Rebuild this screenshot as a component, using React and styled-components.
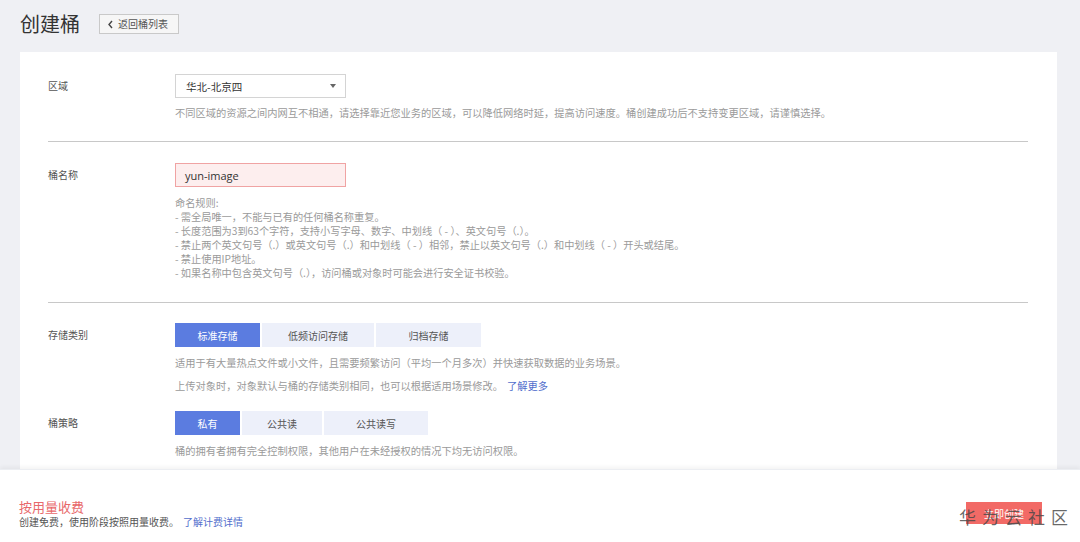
import React from 'react';
import styled, { createGlobalStyle } from 'styled-components';

const GlobalStyle = createGlobalStyle`
  html, body { margin: 0; padding: 0; }
  body {
    background: #eff0f4;
    font-family: "Noto Sans CJK SC", "Noto Sans", sans-serif;
    color: #333;
  }
  * { box-sizing: border-box; }
`;

const Page = styled.div`
  height: 542px;
  display: flex;
  flex-direction: column;
  overflow: hidden;
`;

const Main = styled.div`
  flex: 1;
  overflow: hidden;
  padding: 12px 23px 0 20px;
`;

const Header = styled.div`
  display: flex;
  align-items: center;
  gap: 19px;
  height: 24px;
`;

const Title = styled.h1`
  margin: 0;
  font-size: 20px;
  font-weight: 400;
  line-height: 24px;
  color: #333;
`;

const BackButton = styled.button`
  height: 20px;
  width: 80px;
  padding: 0 0 0 7px;
  border: 1px solid #c9c9c9;
  background: #f6f6f6;
  font-family: "Noto Sans CJK SC", sans-serif;
  font-size: 10px;
  line-height: 18px;
  color: #555;
  display: flex;
  align-items: center;
  gap: 4px;
`;

const Card = styled.div`
  margin-top: 16px;
  background: #fff;
  padding: 22px 29px 40px 28px;
`;

const Row = styled.div`
  display: grid;
  grid-template-columns: 127px 1fr;
  align-items: start;
  margin-top: ${(p) => p.$mt || 0}px;
`;

const Label = styled.div`
  font-size: 10px;
  line-height: 24px;
  color: #555;
`;

const Field = styled.div`
  display: flex;
  flex-direction: column;
  align-items: flex-start;
`;

const Select = styled.div`
  width: 171px;
  height: 24px;
  border: 1px solid #d4d4d4;
  background: #fff;
  display: flex;
  align-items: center;
  justify-content: space-between;
  padding: 0 9px 0 10px;
  font-size: 10.5px;
  color: #333;
`;

const Caret = styled.span`
  width: 0;
  height: 0;
  border-left: 3px solid transparent;
  border-right: 3px solid transparent;
  border-top: 4px solid #666;
`;

const Hint = styled.div`
  margin-top: ${(p) => p.$mt ?? 8}px;
  font-size: 10.25px;
  line-height: 14px;
  color: #9a9a9a;
  white-space: nowrap;
`;

const Link = styled.a`
  color: #526ecc;
  text-decoration: none;
  margin-left: 4px;
`;

const Divider = styled.hr`
  border: 0;
  border-top: 1px solid #c8c8c8;
  margin: ${(p) => p.$top}px 0 ${(p) => p.$bottom}px;
`;

const Input = styled.div`
  width: 171px;
  height: 24px;
  border: 1px solid #f0a3a3;
  background: #fdeeee;
  padding: 0 9px;
  display: flex;
  align-items: center;
  font-family: "Open Sans", "Noto Sans", sans-serif;
  font-size: 11px;
  color: #333;
`;

const Rules = styled.div`
  margin-top: 9px;
  font-size: 10.2px;
  line-height: 14px;
  color: #9a9a9a;
  white-space: nowrap;
`;

const Segment = styled.div`
  display: flex;
  gap: 2px;
`;

const SegButton = styled.button`
  width: ${(p) => p.$w}px;
  height: 24px;
  border: 0;
  padding: 0;
  font-family: "Noto Sans CJK SC", sans-serif;
  font-size: 10px;
  background: ${(p) => (p.$active ? '#5b7ce0' : '#edf0fa')};
  color: ${(p) => (p.$active ? '#fff' : '#555')};
`;

const Footer = styled.div`
  position: relative;
  height: 73px;
  flex: none;
  background: #fff;
  box-shadow: 0 -2px 4px rgba(0, 0, 0, 0.05);
  border-top: 1px solid #eceef2;
  display: flex;
  align-items: center;
  justify-content: space-between;
  padding: 14px 38px 0 19px;
`;

const Pricing = styled.div`
  display: flex;
  flex-direction: column;
`;

const PriceTitle = styled.div`
  font-size: 13px;
  line-height: 17px;
  color: #e8686b;
`;

const PriceSub = styled.div`
  font-size: 10px;
  line-height: 14px;
  color: #555;
`;

const CreateButton = styled.button`
  width: 76px;
  height: 22px;
  border: 0;
  background: #f26a66;
  color: #fff;
  font-family: "Noto Sans CJK SC", sans-serif;
  font-size: 10px;
`;

const Watermark = styled.div`
  position: absolute;
  right: 12px;
  bottom: 14px;
  display: flex;
  gap: 6px;
  font-size: 17px;
  line-height: 22px;
  color: rgba(70, 70, 70, 0.82);
  pointer-events: none;
`;

const Chevron = () => (
  <svg width="7" height="9" viewBox="0 0 7 9">
    <path d="M5 1 L2 4.5 L5 8" fill="none" stroke="#444" strokeWidth="1.4" />
  </svg>
);

export default function App() {
  return (
    <>
      <GlobalStyle />
      <Page>
        <Main>
          <Header>
            <Title>创建桶</Title>
            <BackButton>
              <Chevron />
              返回桶列表
            </BackButton>
          </Header>
          <Card>
            <Row>
              <Label>区域</Label>
              <Field>
                <Select>
                  <span>华北-北京四</span>
                  <Caret />
                </Select>
                <Hint>
                  不同区域的资源之间内网互不相通，请选择靠近您业务的区域，可以降低网络时延，提高访问速度。桶创建成功后不支持变更区域，请谨慎选择。
                </Hint>
              </Field>
            </Row>
            <Divider $top={21} $bottom={21} />
            <Row>
              <Label>桶名称</Label>
              <Field>
                <Input>yun-image</Input>
                <Rules>
                  <div>命名规则:</div>
                  <div>- 需全局唯一，不能与已有的任何桶名称重复。</div>
                  <div>- 长度范围为3到63个字符，支持小写字母、数字、中划线（ - ）、英文句号（.）。</div>
                  <div>- 禁止两个英文句号（.）或英文句号（.）和中划线（ - ）相邻，禁止以英文句号（.）和中划线（ - ）开头或结尾。</div>
                  <div>- 禁止使用IP地址。</div>
                  <div>- 如果名称中包含英文句号（.），访问桶或对象时可能会进行安全证书校验。</div>
                </Rules>
              </Field>
            </Row>
            <Divider $top={22} $bottom={20} />
            <Row>
              <Label>存储类别</Label>
              <Field>
                <Segment>
                  <SegButton $w={85} $active>标准存储</SegButton>
                  <SegButton $w={112}>低频访问存储</SegButton>
                  <SegButton $w={105}>归档存储</SegButton>
                </Segment>
                <Hint $mt={9}>
                  适用于有大量热点文件或小文件，且需要频繁访问（平均一个月多次）并快速获取数据的业务场景。
                </Hint>
                <Hint $mt={9}>
                  上传对象时，对象默认与桶的存储类别相同，也可以根据适用场景修改。
                  <Link>了解更多</Link>
                </Hint>
              </Field>
            </Row>
            <Row $mt={18}>
              <Label>桶策略</Label>
              <Field>
                <Segment>
                  <SegButton $w={65} $active>私有</SegButton>
                  <SegButton $w={80}>公共读</SegButton>
                  <SegButton $w={104}>公共读写</SegButton>
                </Segment>
                <Hint $mt={9}>
                  桶的拥有者拥有完全控制权限，其他用户在未经授权的情况下均无访问权限。
                </Hint>
              </Field>
            </Row>
          </Card>
        </Main>
        <Footer>
          <Pricing>
            <PriceTitle>按用量收费</PriceTitle>
            <PriceSub>
              创建免费，使用阶段按照用量收费。
              <Link>了解计费详情</Link>
            </PriceSub>
          </Pricing>
          <CreateButton>立即创建</CreateButton>
          <Watermark>
            <span>华</span>
            <span>为</span>
            <span>云</span>
            <span>社</span>
            <span>区</span>
          </Watermark>
        </Footer>
      </Page>
    </>
  );
}
